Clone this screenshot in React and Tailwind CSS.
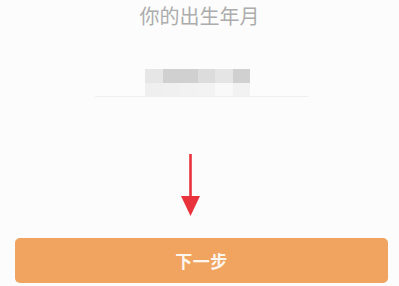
import React from "react";

const topRow = ["#e6e6e6", "#d0d0d0", "#d0d0d0", "#dcdcdc", "#e5e5e5", "#d0d0d0"];
const botRow = ["#efefef", "#f0f0f0", "#f2f2f2", "#f3f3f3", "#f9f9f9", "#f2f2f2"];

export default function App() {
  return (
    <div className="w-[399px] h-[286px] bg-[#fcfcfc] flex flex-col items-center overflow-hidden" style={{ fontFamily: '"Noto Sans CJK SC", "Noto Sans", sans-serif' }}>
      <div className="mt-[3px] h-[26px] flex items-center text-[20px] leading-none text-[#acacac]">
        你的出生年月
      </div>
      <div className="mt-[40px] ml-[4px] w-[213px] flex flex-col items-start">
        <div className="ml-[50px] flex flex-col">
          <div className="flex">
            {topRow.map((c, i) => (
              <div key={i} className="w-[17.5px] h-[14px]" style={{ backgroundColor: c }} />
            ))}
          </div>
          <div className="flex">
            {botRow.map((c, i) => (
              <div key={i} className="w-[17.5px] h-[13px]" style={{ backgroundColor: c }} />
            ))}
          </div>
        </div>
        <div className="w-full h-px bg-[#efefef]" />
      </div>
      <svg className="mt-[57px] ml-[-18px]" width="22" height="63" viewBox="0 0 22 63">
        <line x1="10.5" y1="0" x2="10.5" y2="44" stroke="#e8333c" strokeWidth="2.6" />
        <polygon points="1,42 20,42 10.5,62" fill="#e8333c" />
      </svg>
      <div className="mt-[21px] ml-[4px] w-[373px] h-[45px] rounded-[5px] bg-[#f0a45f] flex items-center justify-center">
        <span className="text-[17px] font-bold text-[#fdf6ee] leading-none tracking-[0.5px]">下一步</span>
      </div>
    </div>
  );
}
